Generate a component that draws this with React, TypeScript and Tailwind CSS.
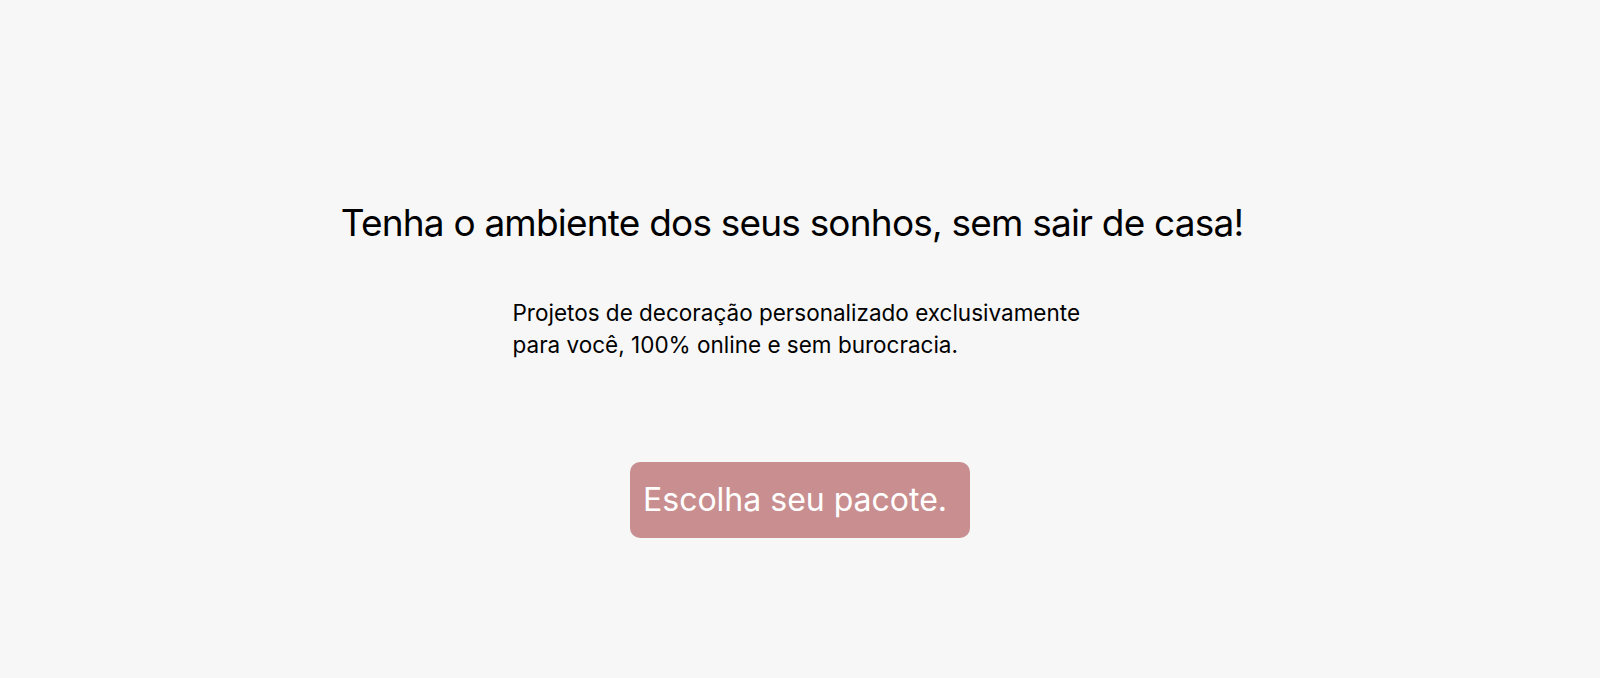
export default function App() {
  return (
    <div className="min-h-screen bg-[#f7f7f7] font-['Inter','Liberation_Sans',sans-serif] text-black">
      <section className="flex flex-col items-center pt-[198px]">
        <h1 className="mr-[16px] text-[37px] leading-[50px] tracking-[-0.8px]">
          Tenha o ambiente dos seus sonhos, sem sair de casa!
        </h1>
        <p className="mt-[49px] w-[575px] text-[22.5px] leading-[32px]">
          Projetos de decoração personalizado exclusivamente para você, 100% online e sem burocracia.
        </p>
        <button className="mt-[101px] flex h-[76px] w-[340px] items-center rounded-[10px] bg-[#c98f90] px-[13px] text-[32px] text-white">
          Escolha seu pacote.
        </button>
      </section>
    </div>
  );
}
